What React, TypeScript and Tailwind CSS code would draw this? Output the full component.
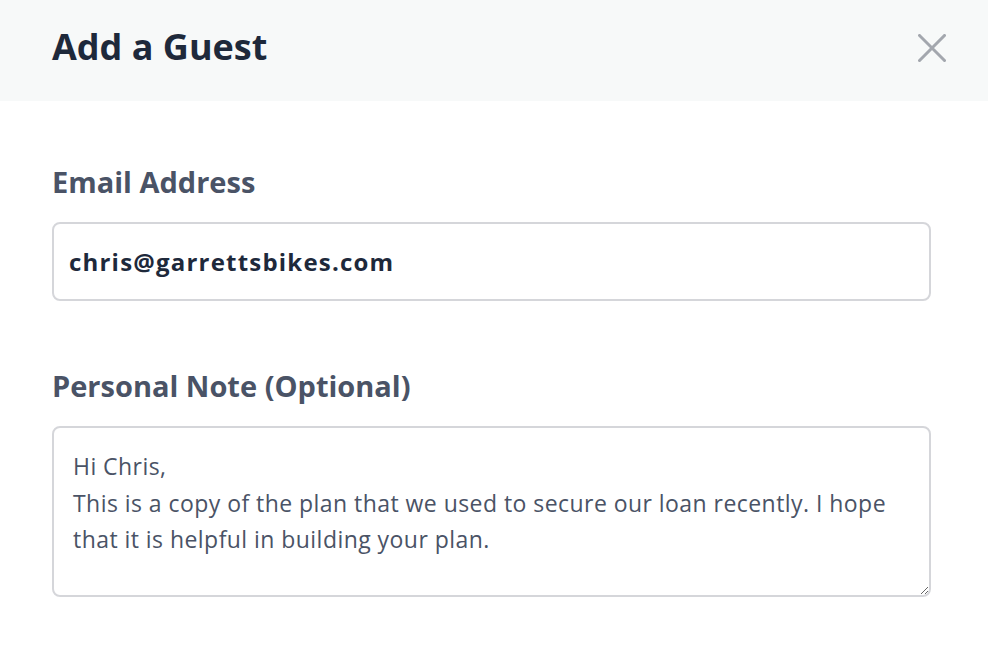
import React from "react";

const font = "'Open Sans', 'Noto Sans', sans-serif";

export default function App() {
  return (
    <div className="w-[988px] h-[668px] bg-white overflow-hidden" style={{ fontFamily: font }}>
      <div className="h-[101px] bg-[#f7f9f9] flex items-start justify-between pl-[52px] pr-[42px]">
        <h1 className="pt-[29px] text-[36px] leading-[36px] font-bold text-[#1e293b]">Add a Guest</h1>
        <svg width="28" height="28" viewBox="0 0 28 28" className="mt-[34px] text-[#a3a7ae]">
          <path d="M1.5 1.5 L26.5 26.5 M26.5 1.5 L1.5 26.5" stroke="currentColor" strokeWidth="3" strokeLinecap="square" />
        </svg>
      </div>
      <div className="pl-[52px] pr-[57px] pt-[63px]">
        <label className="block text-[29px] font-bold text-[#4a5366] leading-[36px]">Email Address</label>
        <div className="mt-[22px] h-[79px] border-2 border-[#d5d6da] rounded-[8px] flex items-center px-[15px]">
          <span className="text-[24px] font-bold text-[#1e293b] tracking-[1.2px]">chris@garrettsbikes.com</span>
        </div>
        <label className="block mt-[67px] text-[29px] font-bold text-[#4a5366] leading-[36px]">Personal Note (Optional)</label>
        <textarea
          className="mt-[22px] block w-full h-[171px] border-2 border-[#d5d6da] rounded-[8px] pl-[19px] pr-[18px] pt-[20px] pb-[10px] text-[23px] leading-[36.5px] tracking-[0.45px] text-[#4a5366] outline-none"
          style={{ fontFamily: font }}
          defaultValue={"Hi Chris,\nThis is a copy of the plan that we used to secure our loan recently. I hope that it is helpful in building your plan."}
        />
      </div>
    </div>
  );
}
